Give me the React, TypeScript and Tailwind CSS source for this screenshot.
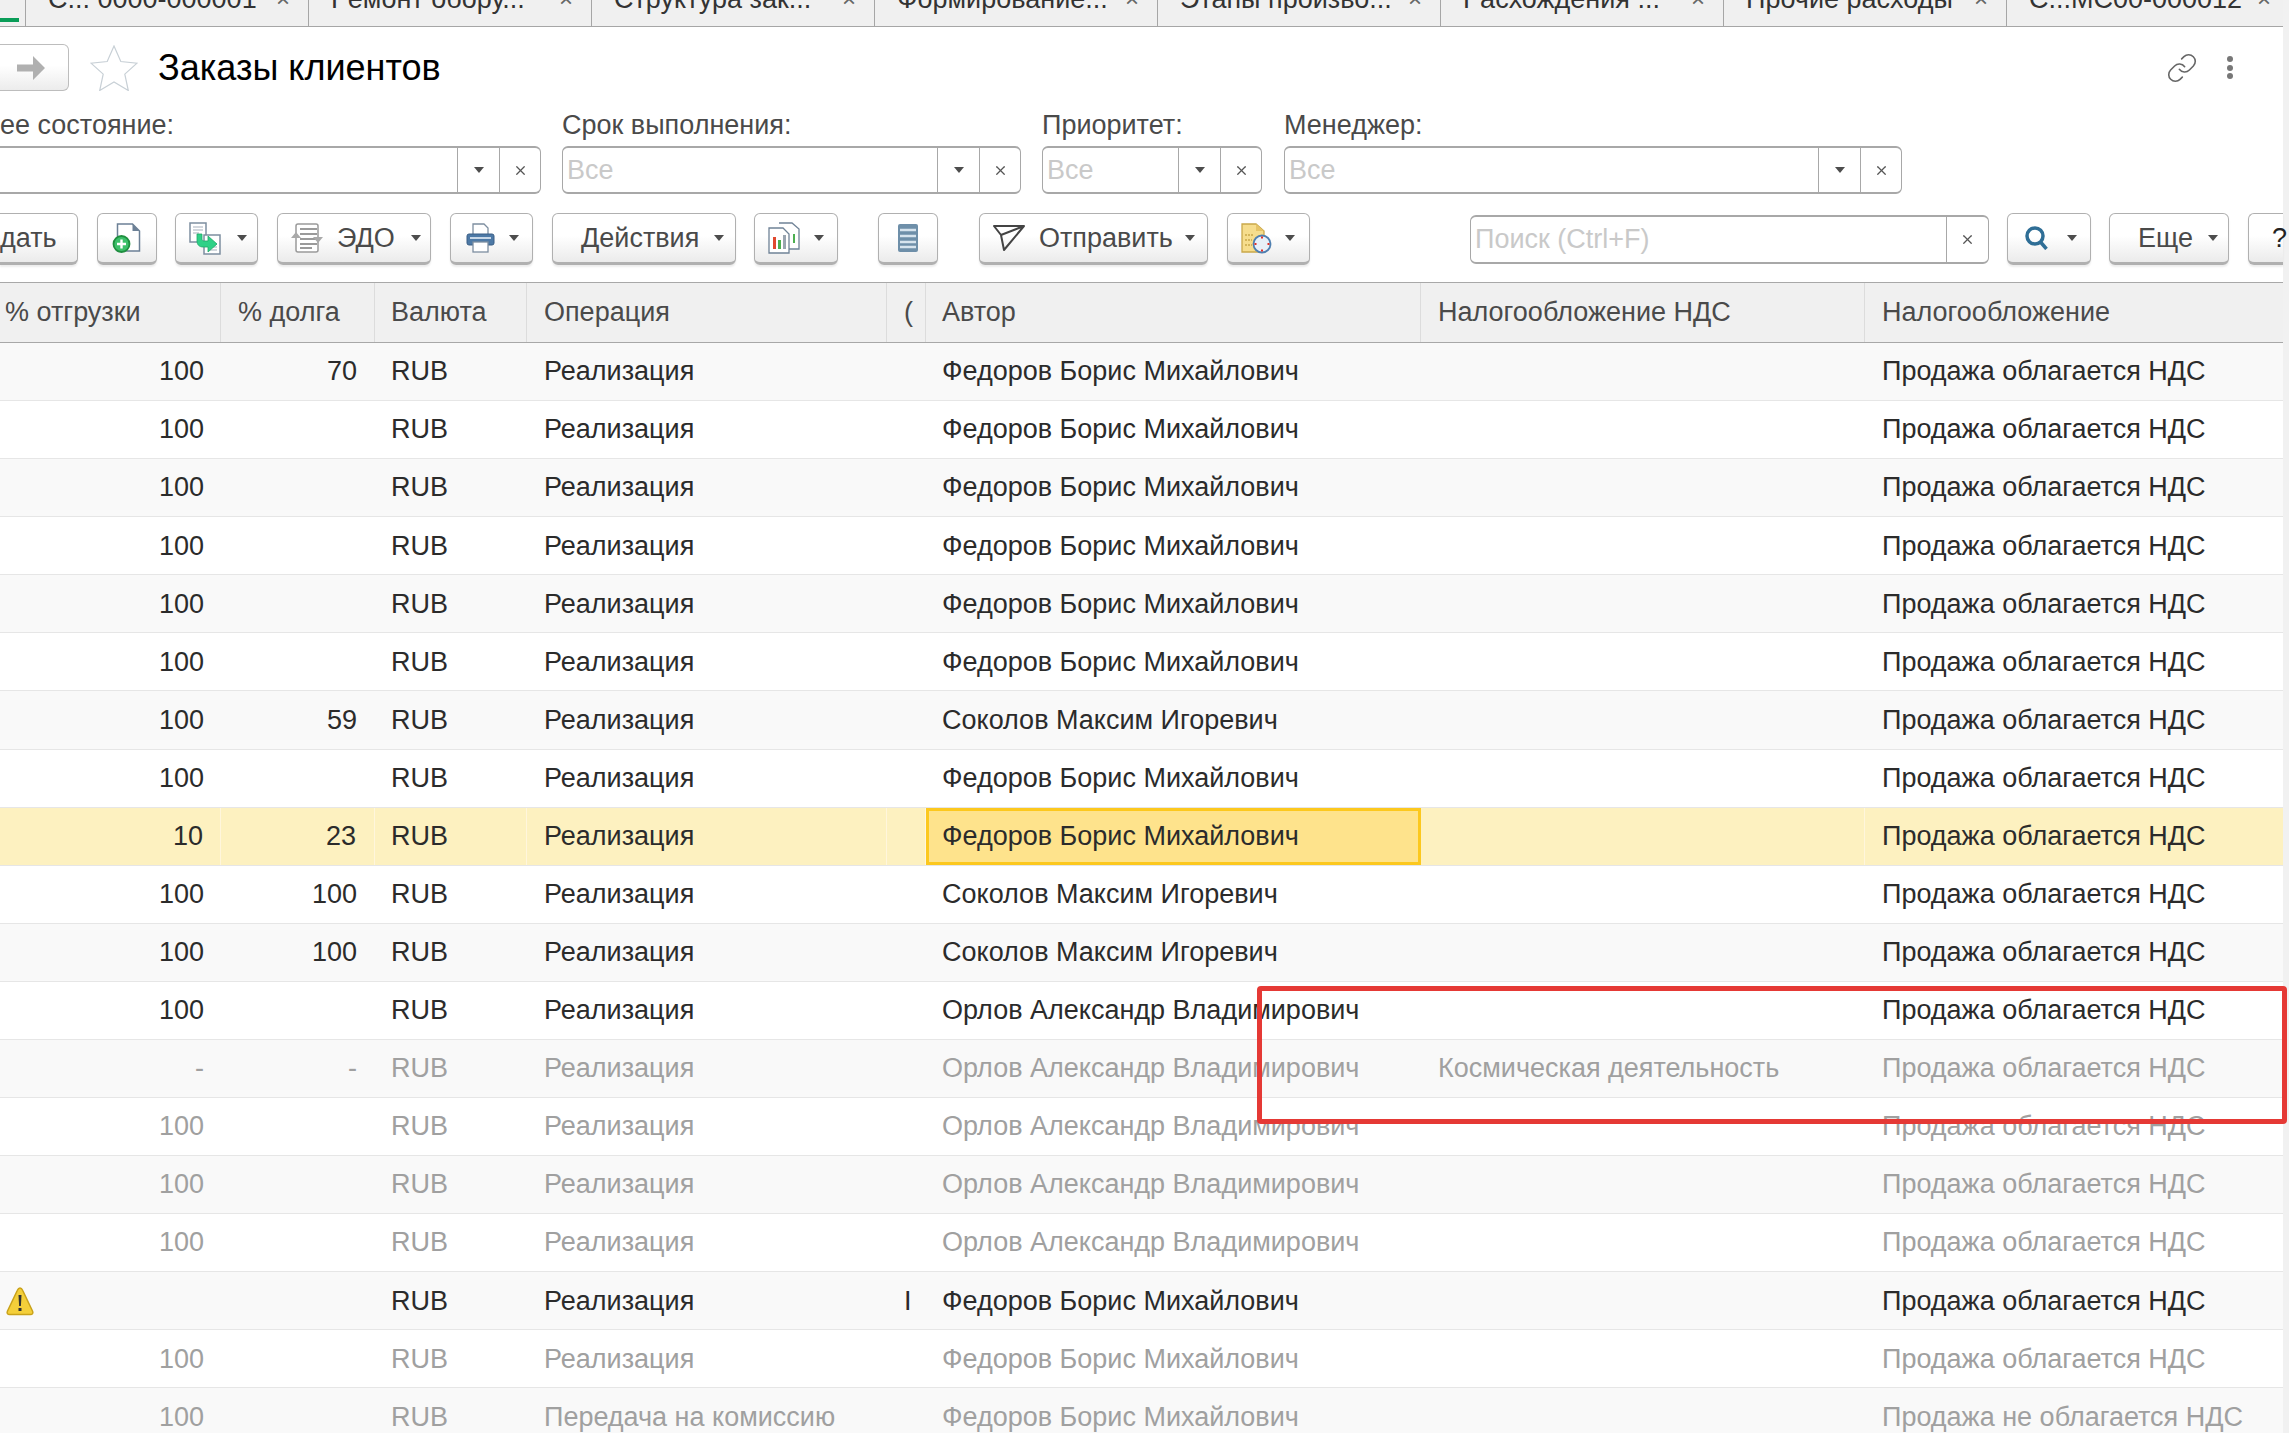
import type { ReactNode } from "react";
import { X } from "lucide-react";

type Row = {
  ship: string;
  debt: string;
  op: string;
  author: string;
  vat: string;
  tax: string;
  grey: boolean;
  warn?: boolean;
  mark?: string;
  selected?: boolean;
};

const FEDOROV = "Федоров Борис Михайлович";
const SOKOLOV = "Соколов Максим Игоревич";
const ORLOV = "Орлов Александр Владимирович";
const SALE = "Реализация";
const TAX = "Продажа облагается НДС";

const rows: Row[] = [
  { ship: "100", debt: "70", op: SALE, author: FEDOROV, vat: "", tax: TAX, grey: false },
  { ship: "100", debt: "", op: SALE, author: FEDOROV, vat: "", tax: TAX, grey: false },
  { ship: "100", debt: "", op: SALE, author: FEDOROV, vat: "", tax: TAX, grey: false },
  { ship: "100", debt: "", op: SALE, author: FEDOROV, vat: "", tax: TAX, grey: false },
  { ship: "100", debt: "", op: SALE, author: FEDOROV, vat: "", tax: TAX, grey: false },
  { ship: "100", debt: "", op: SALE, author: FEDOROV, vat: "", tax: TAX, grey: false },
  { ship: "100", debt: "59", op: SALE, author: SOKOLOV, vat: "", tax: TAX, grey: false },
  { ship: "100", debt: "", op: SALE, author: FEDOROV, vat: "", tax: TAX, grey: false },
  { ship: "10", debt: "23", op: SALE, author: FEDOROV, vat: "", tax: TAX, grey: false, selected: true },
  { ship: "100", debt: "100", op: SALE, author: SOKOLOV, vat: "", tax: TAX, grey: false },
  { ship: "100", debt: "100", op: SALE, author: SOKOLOV, vat: "", tax: TAX, grey: false },
  { ship: "100", debt: "", op: SALE, author: ORLOV, vat: "", tax: TAX, grey: false },
  { ship: "-", debt: "-", op: SALE, author: ORLOV, vat: "Космическая деятельность", tax: TAX, grey: true },
  { ship: "100", debt: "", op: SALE, author: ORLOV, vat: "", tax: TAX, grey: true },
  { ship: "100", debt: "", op: SALE, author: ORLOV, vat: "", tax: TAX, grey: true },
  { ship: "100", debt: "", op: SALE, author: ORLOV, vat: "", tax: TAX, grey: true },
  { ship: "", debt: "", op: SALE, author: FEDOROV, vat: "", tax: TAX, grey: false, warn: true, mark: "I" },
  { ship: "100", debt: "", op: SALE, author: FEDOROV, vat: "", tax: TAX, grey: true },
  { ship: "100", debt: "", op: "Передача на комиссию", author: FEDOROV, vat: "", tax: "Продажа не облагается НДС", grey: true },
];

const tabs = [
  "С... 0000-000001",
  "Ремонт обору...",
  "Структура зак...",
  "Формирование...",
  "Этапы произво...",
  "Расхождения ...",
  "Прочие расходы",
  "С...МС00-000012",
];

const GRID = "grid grid-cols-[221px_154px_152px_360px_39px_495px_444px_418px]";

function Caret() {
  return (
    <svg width="10" height="6" viewBox="0 0 10 6" className="shrink-0">
      <path d="M0 0h10L5 6z" fill="#4d4d4d" />
    </svg>
  );
}

function ToolButton({ className, children }: { className: string; children: ReactNode }) {
  return (
    <div className={`flex h-[52px] shrink-0 items-center rounded-md border-x-[1.5px] border-t-[1.5px] border-b-[3px] border-[#b0b0b0] bg-linear-to-b from-white from-45% to-[#ebebeb] text-[27px] text-[#4a4a4a] shadow-[0_2px_2px_rgba(0,0,0,0.08)] ${className}`}>
      {children}
    </div>
  );
}

function Field({ label, className, arrowClass, placeholder }: { label: string; className: string; arrowClass?: string; placeholder?: string }) {
  return (
    <div className={`flex flex-col ${className}`}>
      <div className="h-[32px] whitespace-nowrap text-[27px] leading-[32px] text-[#4a4a4a]">{label}</div>
      <div className={`mt-[5px] flex h-[48px] items-stretch rounded-md border-x-[1.5px] border-y-2 border-[#a8a8a8] bg-white ${arrowClass ?? ""}`}>
        <div className="flex-1 pl-[4px] text-[27px] leading-[44px] text-[#c9c9c9]">{placeholder}</div>
        <div className="flex w-[42px] items-center justify-center border-l border-[#a8a8a8]">
          <Caret />
        </div>
        <div className="flex w-[41px] items-center justify-center border-l border-[#a8a8a8]">
          <X size={15} strokeWidth={2} color="#555555" />
        </div>
      </div>
    </div>
  );
}

function Cell({ className, children }: { className: string; children?: ReactNode }) {
  return <div className={`flex items-center overflow-hidden whitespace-nowrap ${className}`}>{children}</div>;
}

function WarnIcon() {
  return (
    <svg width="30" height="30" viewBox="0 0 30 30">
      <path d="M15 2c1.2 0 2 .8 2.6 2.2l10 21c.8 2-.2 3.3-2.2 3.3H4.6c-2 0-3-1.3-2.2-3.3l10-21C13 2.800 13.800 2 15 2z" fill="#f4cf3a" stroke="#c9a21a" strokeWidth="1.500" />
      <path d="M13.500 9h3l-.6 11h-1.800z" fill="#333333" />
      <rect x="13.500" y="22" width="3" height="3" fill="#333333" />
    </svg>
  );
}

export default function App() {
  return (
    <div className="flex h-[1433px] w-[2289px] overflow-hidden bg-[#f1f1f1] font-['Liberation_Sans',Arial,sans-serif]">
      <div className="relative flex w-[2283px] shrink-0 flex-col bg-white">
        {/* вкладки сверху, текст обрезан краем экрана */}
        <div className="flex h-[27px] shrink-0 border-b border-[#a6a6a6] bg-[#f0f0f0]">
          <div className="flex w-[26px] shrink-0 items-start border-r-[1.5px] border-[#a6a6a6] pt-[18px]">
            <div className="h-[4px] w-[19px] bg-[#0a9d58]" />
          </div>
          {tabs.map((t) => (
            <div key={t} className="flex w-[283px] shrink-0 justify-between overflow-hidden border-r-[1.5px] border-[#a6a6a6] pl-[22px] pr-[18px]">
              <span className="-mt-[17px] whitespace-nowrap text-[27px] leading-[32px] text-[#333333]">{t}</span>
              <span className="-mt-[11px] text-[24px] leading-[20px] text-[#666666]">×</span>
            </div>
          ))}
        </div>

        {/* заголовок */}
        <div className="mt-[17px] flex h-[47px] shrink-0 items-center">
          <div className="flex h-[47px] w-[69px] items-center justify-end rounded-r-md border-y-[1.5px] border-r-[1.5px] border-[#bdbdbd] bg-linear-to-b from-white from-45% to-[#ececec] pr-[23px]">
            <svg width="28" height="24" viewBox="0 0 28 24">
              <path d="M0 8.500h16V0l12 12-12 12v-8.500H0z" fill="#b0b0b0" />
            </svg>
          </div>
          <svg width="48" height="46" viewBox="0 0 48 46" className="ml-[21px]">
            <path d="M24 1l6.800 15.500 16.200 1.700-12.200 10.900 3.500 16.400L24 37l-14.300 8.500 3.500-16.400L1 18.200l16.200-1.700z" fill="#ffffff" stroke="#c8d0d6" strokeWidth="1.200" />
          </svg>
          <div className="ml-[20px] text-[36px] leading-[44px] text-black">Заказы клиентов</div>
          <svg width="32" height="32" viewBox="0 0 24 24" fill="none" stroke="#666666" strokeWidth="1.200" strokeLinecap="round" className="ml-auto">
            <path d="M10 13a5 5 0 0 0 7.540.540l3-3a5 5 0 0 0-7.070-7.070l-1.720 1.710" />
            <path d="M14 11a5 5 0 0 0-7.540-.540l-3 3a5 5 0 0 0 7.070 7.070l1.710-1.710" />
          </svg>
          <div className="ml-[29px] mr-[50px] flex flex-col gap-[2.500px]">
            <div className="h-[6px] w-[6px] rounded-full bg-[#777777]" />
            <div className="h-[6px] w-[6px] rounded-full bg-[#777777]" />
            <div className="h-[6px] w-[6px] rounded-full bg-[#777777]" />
          </div>
        </div>

        {/* фильтры */}
        <div className="mt-[18px] flex h-[85px] shrink-0">
          <Field label="ее состояние:" className="w-[541px]" arrowClass="rounded-l-none border-l-0" />
          <Field label="Срок выполнения:" className="ml-[21px] w-[459px]" placeholder="Все" />
          <Field label="Приоритет:" className="ml-[21px] w-[220px]" placeholder="Все" />
          <Field label="Менеджер:" className="ml-[22px] w-[618px]" placeholder="Все" />
        </div>

        {/* панель кнопок */}
        <div className="mt-[19px] flex h-[52px] shrink-0 items-center">
          <ToolButton className="w-[78px] justify-start rounded-l-none border-l-0">
            <span>дать</span>
          </ToolButton>
          <ToolButton className="ml-[19px] w-[60px] justify-center">
            <svg width="30" height="30" viewBox="0 0 30 30">
              <path d="M5.500 1h15l7 7v20h-22z" fill="#ffffff" stroke="#6c8096" strokeWidth="1.500" />
              <path d="M20.500 1v7h7z" fill="#6c8096" />
              <circle cx="9.500" cy="21" r="8" fill="#3cc06a" stroke="#1f8f3f" strokeWidth="1.800" />
              <path d="M9.500 16.500v9M5 21h9" stroke="#ffffff" strokeWidth="2.400" />
            </svg>
          </ToolButton>
          <ToolButton className="ml-[18px] w-[83px] gap-[15px] pl-[13px]">
            <svg width="33" height="33" viewBox="0 0 33 33" className="shrink-0">
              <rect x="1" y="1" width="16" height="19" fill="#ffffff" stroke="#7d8ea0" strokeWidth="1.500" />
              <rect x="15" y="13" width="16" height="19" fill="#ffffff" stroke="#7d8ea0" strokeWidth="1.500" />
              <path d="M4 5h10M4 8h10M4 11h6M20 22h8M20 25h8M20 28h8" stroke="#a5b0bc" strokeWidth="1.200" />
              <path d="M8 12h5v5c0 1.500 1 2 2.500 2H19v-5l9 8-9 8v-5h-5c-4 0-6-2.500-6-6z" fill="#2fd187" stroke="#1ea868" strokeWidth="0.800" />
            </svg>
            <Caret />
          </ToolButton>
          <ToolButton className="ml-[19px] w-[154px] pl-[13px]">
            <svg width="32" height="30" viewBox="0 0 32 30" className="shrink-0">
              <rect x="5" y="1" width="22" height="28" rx="2" fill="#ffffff" stroke="#9a9a9a" strokeWidth="1.500" />
              <path d="M9 6h17M9 11h17M9 16h17M9 21h17M9 25h12" stroke="#9a9a9a" strokeWidth="1.800" />
              <path d="M0 15l5-6 5 6zM22 14l5 6 5-6z" fill="#a9a9a9" />
            </svg>
            <span className="ml-[14px]">ЭДО</span>
            <span className="ml-[16px]">
              <Caret />
            </span>
          </ToolButton>
          <ToolButton className="ml-[19px] w-[83px] gap-[14px] pl-[15px]">
            <svg width="29" height="30" viewBox="0 0 29 30" className="shrink-0">
              <path d="M7 1h11l4 4v10H7z" fill="#ffffff" stroke="#7d8ea0" strokeWidth="1.300" />
              <rect x="1" y="11" width="27" height="11" rx="2" fill="#4d79a6" stroke="#3a5f86" strokeWidth="1" />
              <rect x="4" y="14" width="21" height="2" fill="#c8d8e8" />
              <rect x="7" y="19" width="15" height="10" fill="#ffffff" stroke="#7d8ea0" strokeWidth="1.300" />
            </svg>
            <Caret />
          </ToolButton>
          <ToolButton className="ml-[19px] w-[184px] pl-[28px]">
            <span>Действия</span>
            <span className="ml-[15px]">
              <Caret />
            </span>
          </ToolButton>
          <ToolButton className="ml-[18px] w-[84px] gap-[14px] pl-[13px]">
            <svg width="32" height="32" viewBox="0 0 32 32" className="shrink-0">
              <path d="M11 1h13l7 6v20H20" fill="#ffffff" stroke="#6f8296" strokeWidth="1.300" />
              <path d="M1 6h14l6 6v19H1z" fill="#ffffff" stroke="#6f8296" strokeWidth="1.300" />
              <rect x="5" y="15" width="3" height="12" fill="#e0492f" />
              <rect x="10" y="18" width="3" height="9" fill="#4caf50" />
              <rect x="15" y="13" width="3" height="14" fill="#9aa5b0" />
              <rect x="25" y="12" width="2" height="9" fill="#4caf50" />
            </svg>
            <Caret />
          </ToolButton>
          <ToolButton className="ml-[40px] w-[60px] justify-center">
            <svg width="20" height="28" viewBox="0 0 20 28">
              <rect width="20" height="28" rx="2" fill="#6e8fa9" />
              <path d="M2 6h16M2 12h16M2 18h16M2 23h16" stroke="#d7e4ee" strokeWidth="2.500" />
            </svg>
          </ToolButton>
          <ToolButton className="ml-[41px] w-[229px] pl-[13px]">
            <svg width="32" height="27" viewBox="0 0 32 27" className="shrink-0">
              <path d="M1 1h30L11 25 8 10zM8 10l23-9" fill="none" stroke="#444444" strokeWidth="2" strokeLinejoin="round" />
            </svg>
            <span className="ml-[14px]">Отправить</span>
            <span className="ml-[12px]">
              <Caret />
            </span>
          </ToolButton>
          <ToolButton className="ml-[19px] w-[83px] gap-[13px] pl-[13px]">
            <svg width="31" height="31" viewBox="0 0 31 31" className="shrink-0">
              <path d="M1 1h14l8 7v21H1z" fill="#f6dd8d" stroke="#c9a84a" strokeWidth="1.300" />
              <path d="M15 1v7h8z" fill="#e6c467" />
              <path d="M4 12h9M4 17h7M4 22h7" stroke="#c9a84a" strokeWidth="1.500" strokeDasharray="2 1" />
              <circle cx="21" cy="21" r="8.500" fill="#e8f0f8" stroke="#4f7fb0" strokeWidth="1.800" />
              <path d="M21 13.500v2M21 26.500v2M13.500 21h2M26.500 21h2" stroke="#e0302a" strokeWidth="2" />
            </svg>
            <Caret />
          </ToolButton>
          <div className="ml-[160px] flex h-[49px] w-[519px] shrink-0 rounded-md border-x-[1.5px] border-y-2 border-[#a8a8a8] bg-white">
            <div className="flex-1 pl-[4px] text-[27px] leading-[44px] text-[#c9c9c9]">Поиск (Ctrl+F)</div>
            <div className="flex w-[42px] items-center justify-center border-l border-[#a8a8a8]">
              <X size={15} strokeWidth={2} color="#555555" />
            </div>
          </div>
          <ToolButton className="ml-[18px] w-[84px] pl-[17px]">
            <svg width="24" height="24" viewBox="0 0 24 24" fill="none" stroke="#2f6e96" strokeWidth="3.500" className="shrink-0">
              <circle cx="10" cy="10" r="8" />
              <path d="M15.500 16l6 7" />
            </svg>
            <span className="ml-[18px]">
              <Caret />
            </span>
          </ToolButton>
          <ToolButton className="ml-[18px] w-[120px] pl-[28px]">
            <span>Еще</span>
            <span className="ml-[15px]">
              <Caret />
            </span>
          </ToolButton>
          <ToolButton className="ml-[19px] w-[35px] justify-start rounded-r-none border-r-0 pl-[23px]">
            <span className="text-[#222222]">?</span>
          </ToolButton>
        </div>

        {/* таблица */}
        <div className={`mt-[17px] ${GRID} h-[61px] shrink-0 border-y border-[#a8a8a8] bg-[#f0f0f0] text-[27px] text-[#4a4a4a]`}>
          <Cell className="border-r border-[#dcdcdc] pl-[5px]">% отгрузки</Cell>
          <Cell className="border-r border-[#dcdcdc] pl-[17px]">% долга</Cell>
          <Cell className="border-r border-[#dcdcdc] pl-[16px]">Валюта</Cell>
          <Cell className="border-r border-[#dcdcdc] pl-[17px]">Операция</Cell>
          <Cell className="border-r border-[#dcdcdc] pl-[17px]">(</Cell>
          <Cell className="border-r border-[#dcdcdc] pl-[16px]">Автор</Cell>
          <Cell className="border-r border-[#dcdcdc] pl-[17px]">Налогообложение НДС</Cell>
          <Cell className="pl-[17px]">Налогообложение</Cell>
        </div>

        {rows.map((r, i) => (
          <div
            key={i}
            className={`${GRID} h-[58.080px] shrink-0 border-b border-[#e6e6e6] text-[27px] ${r.selected ? "bg-[#fdf1c0]" : i % 2 === 0 ? "bg-[#f9f9f9]" : "bg-white"} ${r.grey ? "text-[#a0a0a0]" : "text-[#2b2b2b]"}`}
          >
            <Cell className={`pr-[17px] ${r.warn ? "justify-start pl-[5px]" : "justify-end"} ${r.selected ? "border-r border-[#fff6dc]" : ""}`}>
              {r.warn ? <WarnIcon /> : r.ship}
            </Cell>
            <Cell className={`justify-end pr-[18px] ${r.selected ? "border-r border-[#fff6dc]" : ""}`}>{r.debt}</Cell>
            <Cell className={`pl-[16px] ${r.selected ? "border-r border-[#fff6dc]" : ""}`}>RUB</Cell>
            <Cell className={`pl-[17px] ${r.selected ? "border-r border-[#fff6dc]" : ""}`}>{r.op}</Cell>
            <Cell className={`pl-[17px] ${r.selected ? "border-r border-[#fff6dc]" : ""}`}>{r.mark}</Cell>
            <Cell className={r.selected ? "border-[3px] border-[#fcc81e] bg-[#fee38c] pl-[13px]" : "pl-[16px]"}>{r.author}</Cell>
            <Cell className={`pl-[17px] ${r.selected ? "border-r border-[#fff6dc]" : ""}`}>{r.vat}</Cell>
            <Cell className="pl-[17px]">{r.tax}</Cell>
          </div>
        ))}

        {/* красная рамка поверх таблицы */}
        <div className="absolute left-[1257px] top-[986px] h-[138px] w-[1030px] rounded-[4px] border-[5px] border-[#e53935]" />
      </div>
    </div>
  );
}
